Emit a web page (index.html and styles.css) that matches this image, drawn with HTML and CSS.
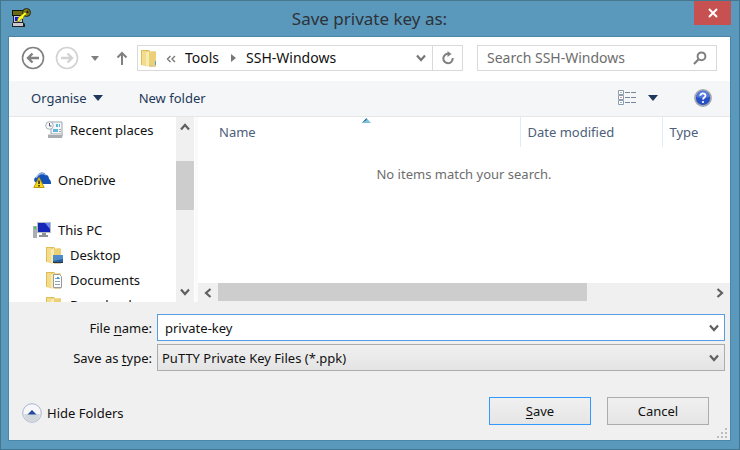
FILE: index.html
```html
<!DOCTYPE html>
<html lang="en">
<head>
  <meta charset="UTF-8" />
  <meta name="viewport" content="width=device-width, initial-scale=1.0" />
  <title>Save private key as:</title>
  <link rel="stylesheet" href="styles.css">
</head>
<body>
  <svg class="defs" aria-hidden="true">
    <symbol id="chevron" viewBox="0 0 10 10"><path d="M1 2.5 5 7 9 2.5" fill="none" stroke="currentColor" stroke-width="2.2"/></symbol>
    <symbol id="folder" viewBox="0 0 18 18">
      <path d="M1 1h8l1 1v14l-2 1-7-1z" fill="#dfbd55"/>
      <path d="M2 2h4v14H2z" fill="#f3dc8c"/>
      <path d="M6 3l9-1 1 1v13l-9 1z" fill="#ecd078"/>
      <path d="M6 3l3-1v15l-3 1z" fill="#f9eab0"/>
      <path d="M9 17h7" stroke="#c9a445"/>
    </symbol>
  </svg>

  <div class="window">
    <header class="titlebar">
      <svg class="app-icon" viewBox="0 0 20 20">
        <path d="M1 2h14v6H1z" fill="#111"/>
        <path d="M2 3h11v4H2z" fill="#6b6a14"/>
        <path d="M2 8h10v6l2 2v3H1v-3l1-2z" fill="#222"/>
        <path d="M3 8h8v6H3zM2 15h10v3H2z" fill="#c9c9d2"/>
        <path d="M4 9h4v4H4z" fill="#1414e0"/>
        <circle cx="15.500" cy="4.500" r="4" fill="#7d7b10" stroke="#222"/>
        <circle cx="16.500" cy="4" r="1.200" fill="#222"/>
        <path d="M14 4 7 10l-1 4 3-1 1-2h2l1-3 3-2z" fill="#ffff1a" stroke="#555510" stroke-width=".5"/>
      </svg>
      <h1>Save private key as:</h1>
      <button class="close" aria-label="Close">
        <svg width="10" height="10" viewBox="0 0 10 10"><path d="M1 1l8 8M9 1 1 9" stroke="#fff" stroke-width="2"/></svg>
      </button>
    </header>

    <main class="dialog">
      <nav class="navbar">
        <button class="icon-btn" aria-label="Back">
          <svg width="24" height="24" viewBox="0 0 24 24" fill="none" stroke="#808080"><circle cx="12" cy="12" r="10.500" stroke-width="1.600"/><path d="M7 12h11M11.500 7.500 7 12l4.500 4.500" stroke-width="2.400"/></svg>
        </button>
        <button class="icon-btn forward" aria-label="Forward">
          <svg width="24" height="24" viewBox="0 0 24 24" fill="none" stroke="#d2d2d2"><circle cx="12" cy="12" r="10.500" stroke-width="1.600"/><path d="M6 12h11M12.500 7.500 17 12l-4.500 4.500" stroke-width="2.400"/></svg>
        </button>
        <button class="icon-btn recent" aria-label="Recent locations">
          <svg width="8" height="5" viewBox="0 0 8 5"><path d="M0 0h8L4 5z" fill="#808080"/></svg>
        </button>
        <button class="icon-btn up" aria-label="Up">
          <svg width="12" height="14" viewBox="0 0 12 14" fill="none" stroke="#808080" stroke-width="2"><path d="M6 14V2M1.500 6.500 6 2l4.500 4.500"/></svg>
        </button>
        <div class="address">
          <svg class="address-folder" viewBox="0 0 18 18"><use href="#folder"/><path d="M15 12h1v4h-1z" fill="#4da3c9"/></svg>
          <svg class="crumb-more" width="10" height="8" viewBox="0 0 10 8" fill="none" stroke="#777" stroke-width="1.400"><path d="M4.500 1 1.500 4l3 3M9 1 6 4l3 3"/></svg>
          <a class="crumb" href="#">Tools</a>
          <svg class="crumb-arrow" width="5" height="8" viewBox="0 0 5 8"><path d="M0 0l5 4-5 4z" fill="#777"/></svg>
          <a class="crumb" href="#">SSH-Windows</a>
          <button class="address-drop" aria-label="Previous locations"><svg class="chevron grey"><use href="#chevron"/></svg></button>
          <button class="refresh" aria-label="Refresh">
            <svg width="14" height="14" viewBox="0 0 14 14"><path d="M7.500 2.800A4.700 4.700 0 1 0 11.700 7" fill="none" stroke="#808080" stroke-width="2"/><path d="M6.500 0v6l4-3z" fill="#808080"/></svg>
          </button>
        </div>
        <div class="search">
          <input type="search" placeholder="Search SSH-Windows" aria-label="Search SSH-Windows">
          <svg width="14" height="14" viewBox="0 0 14 14" fill="none" stroke="#808080"><circle cx="8.500" cy="5.300" r="3.900" stroke-width="2"/><path d="M5.800 8 1 13" stroke-width="2.200"/></svg>
        </div>
      </nav>

      <div class="toolbar">
        <button class="tool">Organise <svg width="10" height="6" viewBox="0 0 10 6"><path d="M0 0h10L5 6z" fill="#1e395b"/></svg></button>
        <button class="tool">New folder</button>
        <button class="tool views" aria-label="Change your view">
          <svg width="19" height="15" viewBox="0 0 19 15">
            <path d="M.5.500h5v4h-5zM.5 5.500h5v4h-5zM.5 10.500h5v4h-5z" fill="#fff" stroke="#8d9cab"/>
            <path d="M2.500 2h1v1h-1z" fill="#3b9a4a"/><path d="M2.500 7h1v1h-1z" fill="#d22"/><path d="M2.500 12h1v1h-1z" fill="#2255dd"/>
            <path d="M7 2.500h5M13 2.500h5M7 7.500h5M13 7.500h5M7 12.500h5M13 12.500h5" stroke="#75869a"/>
          </svg>
          <svg width="10" height="6" viewBox="0 0 10 6"><path d="M0 0h10L5 6z" fill="#1e395b"/></svg>
        </button>
        <button class="tool help" aria-label="Help">
          <svg width="18" height="18" viewBox="0 0 18 18">
            <circle cx="9" cy="9" r="8" fill="#2850c4" stroke="#a3a7af" stroke-width="1.800"/>
            <path d="M2.500 8a6.500 6.500 0 0 1 13 0q-6.500 2-13 0z" fill="#5479dc"/>
            <path d="M6.300 6.800C6.300 3.500 11.700 3.700 11.500 6.800 11.400 8.500 9 8.500 9 10.500" fill="none" stroke="#fff" stroke-width="1.800"/>
            <circle cx="9" cy="13" r="1.100" fill="#fff"/>
          </svg>
        </button>
      </div>

      <div class="browser">
        <ul class="tree">
          <li class="child">
            <svg viewBox="0 0 18 18">
              <path d="M6 1h11v12H6z" fill="#f4f8fb" stroke="#9aa4ad"/><path d="M3 13h15l-1 4H3z" fill="#a9adb0"/><path d="M3 13h14v1H3z" fill="#d8dadb"/>
              <path d="M11 3h2v3h-2zM14 3h1v3h-1zM8 8h5v3H8z" fill="#5fb4dd"/><path d="M14 8h2v1h-2zM14 10h2v1h-2z" fill="#9aa"/>
              <circle cx="4.500" cy="4.500" r="3.800" fill="#f7f9fa" stroke="#a7b0b7"/><path d="M4.500 2v3H6.500" fill="none" stroke="#557"/>
            </svg>
            <a href="#">Recent places</a>
          </li>
          <li class="gap-row"></li>
          <li>
            <svg viewBox="0 0 18 18">
              <path d="M2 11C0 8 2 6 4 6 5 1 11 0 13 4c2 0 3 2 3 4 2 1 2 3 2 5H6z" fill="#1552b8"/>
              <path d="M3 7c2-4 6-6 10-3" fill="none" stroke="#9dbbe8" stroke-width="1.200"/>
              <path d="M6 6.500.800 16.500h10.400z" fill="#f7d917" stroke="#b99a10" stroke-linejoin="round"/>
              <path d="M6 9.500v3.500M6 14v1.500" stroke="#222" stroke-width="1.500"/>
            </svg>
            <a href="#">OneDrive</a>
          </li>
          <li class="gap-row"></li>
          <li>
            <svg viewBox="0 0 18 18">
              <path d="M0 5h4v12H0z" fill="#a9b0b3"/><path d="M1 6h2v2H1z" fill="#48c94e"/>
              <path d="M4 1h14v11H4z" fill="#b9bec2"/><path d="M5 2h12v9H5z" fill="#1628b8"/><path d="M12 2h5v6z" fill="#6c8af0"/>
              <path d="M9 12h4v2h2v2H6v-2h3z" fill="#8d9397"/>
            </svg>
            <a href="#">This PC</a>
          </li>
          <li class="child">
            <svg viewBox="0 0 18 18"><use href="#folder"/><path d="M8 9h10v8H8z" fill="#2b5f9c"/><path d="M8 9h10v4l-10 2z" fill="#4f8ccb"/><path d="M8 16h10v1H8z" fill="#24384e"/></svg>
            <a href="#">Desktop</a>
          </li>
          <li class="child">
            <svg viewBox="0 0 18 18"><use href="#folder"/><path d="M8.500 3.500h6l2 2v11h-8z" fill="#fff" stroke="#9a9a9a"/><path d="M10 7.500h5M10 10.500h5M10 13.500h5" stroke="#8aa4bd"/><path d="M12 6h2v2h-2z" fill="#3fa0e0"/></svg>
            <a href="#">Documents</a>
          </li>
          <li class="child">
            <svg viewBox="0 0 18 18"><use href="#folder"/><circle cx="13" cy="11" r="4.500" fill="#2c78b8"/></svg>
            <a href="#">Downloads</a>
          </li>
        </ul>

        <div class="vscroll">
          <button aria-label="Scroll up"><svg class="chevron flip"><use href="#chevron"/></svg></button>
          <div class="vthumb"></div>
          <button aria-label="Scroll down"><svg class="chevron"><use href="#chevron"/></svg></button>
        </div>

        <section class="files">
          <table>
            <thead>
              <tr>
                <th class="name">Name<svg class="sort" width="9" height="5" viewBox="0 0 9 5"><path d="M0 5 4.500 0 9 5z" fill="#7fc0dd"/><path d="M0 5 4.500 0v2z" fill="#2b5f80"/></svg></th>
                <th class="date">Date modified</th>
                <th class="type">Type</th>
              </tr>
            </thead>
            <tbody>
              <tr><td colspan="3">No items match your search.</td></tr>
            </tbody>
          </table>
          <div class="hscroll">
            <button aria-label="Scroll left"><svg class="chevron left"><use href="#chevron"/></svg></button>
            <div class="htrack"><div class="hthumb"></div></div>
            <button aria-label="Scroll right"><svg class="chevron right"><use href="#chevron"/></svg></button>
          </div>
        </section>
      </div>

      <form class="save-form">
        <div class="fields">
          <label for="fileName">File <u>n</u>ame:</label>
          <div class="combo active">
            <input id="fileName" type="text" value="private-key">
            <svg class="chevron"><use href="#chevron"/></svg>
          </div>
          <label for="fileType">Save as <u>t</u>ype:</label>
          <div class="combo">
            <select id="fileType"><option>PuTTY Private Key Files (*.ppk)</option></select>
            <svg class="chevron"><use href="#chevron"/></svg>
          </div>
        </div>
        <div class="actions">
          <button type="button" class="hide-folders">
            <svg width="20" height="20" viewBox="0 0 20 20">
              <circle cx="10" cy="10" r="9.300" fill="#f6f7fa" stroke="#a9b2cf"/>
              <path d="M2 11h16a8 8 0 0 1-16 0z" fill="#d3d8dc"/>
              <path d="M5.500 11.500 10 7l4.500 4.500z" fill="#24489c"/>
            </svg>
            Hide Folders
          </button>
          <button type="button" class="btn default"><span><u>S</u>ave</span></button>
          <button type="button" class="btn">Cancel</button>
        </div>
        <svg class="grip" width="10" height="10" viewBox="0 0 10 10"><path d="M8 0h2v2H8zM4 4h2v2H4zM8 4h2v2H8zM0 8h2v2H0zM4 8h2v2H4zM8 8h2v2H8z" fill="#bdbdbd"/></svg>
      </form>
    </main>
  </div>
</body>
</html>
```
FILE: styles.css
```css
* {
  box-sizing: border-box;
  margin: 0;
  padding: 0;
}
body {
  font-family: 'Noto Sans', 'Open Sans', sans-serif;
  font-size: 13px;
  line-height: 18px;
  color: #111;
}
button,
input,
select {
  font: inherit;
  color: inherit;
  background: none;
  border: none;
  outline: none;
}
button {
  display: flex;
  align-items: center;
  justify-content: center;
}
a {
  color: inherit;
  text-decoration: none;
}
u {
  text-underline-offset: 2px;
}
svg {
  flex: none;
}
.defs {
  position: absolute;
  width: 0;
  height: 0;
}
.window {
  display: flex;
  flex-direction: column;
  height: 100vh;
  padding: 0 8px 8px 7px;
  background: #5a98bc;
  border: 1px solid #44768f;
}

/* title bar */
.titlebar {
  display: flex;
  align-items: flex-start;
  height: 35px;
  padding-left: 3px;
}
.app-icon {
  width: 20px;
  height: 20px;
  margin-top: 7px;
}
.titlebar h1 {
  flex: 1;
  padding: 6px 0 0 14px;
  font-size: 17px;
  font-weight: normal;
  line-height: 24px;
  text-align: center;
  color: #2d3237;
}
.close {
  width: 37px;
  height: 24px;
  background: #c75050;
}
.dialog {
  flex: 1;
  min-height: 0;
  display: flex;
  flex-direction: column;
  background: #f0f0f0;
  border: 1px solid #4c86a7;
}

/* navigation */
.navbar {
  display: flex;
  align-items: center;
  height: 44px;
  padding: 0 13px 2px 12px;
  font-size: 14px;
  background: #fff;
}
.forward {
  margin-left: 10px;
}
.recent {
  margin-left: 12px;
}
.up {
  margin: 0 9px 0 17px;
}
.address {
  flex: 1;
  display: flex;
  align-items: center;
  height: 26px;
  padding-left: 2px;
  border: 1px solid #d9d9d9;
}
.address-folder {
  width: 18px;
  height: 20px;
}
.crumb-more {
  margin: 1px 9px 0 8px;
}
.crumb-arrow {
  margin: 0 10px 0 12px;
}
.address-drop {
  width: 22px;
  margin-left: auto;
}
.refresh {
  width: 30px;
  height: 24px;
  border-left: 1px solid #d9d9d9;
}
.search {
  display: flex;
  align-items: center;
  width: 240px;
  height: 26px;
  margin-left: 14px;
  padding: 0 9px;
  border: 1px solid #d9d9d9;
}
.search input {
  flex: 1;
  min-width: 0;
}
.search input::placeholder {
  color: #6d6d6d;
}

/* toolbar */
.toolbar {
  display: flex;
  align-items: center;
  height: 36px;
  padding: 0 18px 2px 22px;
  background: #f5f6f7;
  border-bottom: 1px solid #e6e7e8;
}
.tool {
  gap: 6px;
  margin-right: 36px;
  color: #1e395b;
}
.views {
  gap: 11px;
  margin-left: auto;
}
.help {
  margin-right: 0;
}

/* folder tree and file list */
.browser {
  flex: 1;
  min-height: 0;
  display: flex;
  background: #fff;
}
.tree {
  width: 167px;
  overflow: hidden;
  list-style: none;
}
.tree li {
  display: flex;
  align-items: center;
  gap: 7px;
  height: 25px;
  padding-left: 24px;
  white-space: nowrap;
}
.tree li.child {
  padding-left: 36px;
}
.tree svg {
  width: 18px;
  height: 18px;
}
.chevron {
  width: 10px;
  height: 10px;
  color: #606060;
}
.chevron.grey {
  color: #777;
}
.chevron.flip {
  transform: rotate(180deg);
}
.chevron.left {
  transform: rotate(90deg);
}
.chevron.right {
  transform: rotate(-90deg);
}
.vscroll {
  display: flex;
  flex-direction: column;
  justify-content: space-between;
  width: 18px;
  background: #f0f0f0;
}
.vscroll button {
  width: 18px;
  height: 20px;
}
.vthumb {
  height: 26%;
  margin-bottom: 48px;
  background: #cdcdcd;
}
.files {
  flex: 1;
  display: flex;
  flex-direction: column;
  justify-content: space-between;
  margin-left: 1px;
  border-left: 3px solid #fafafa;
}
.files table {
  width: 100%;
  table-layout: fixed;
  border-collapse: collapse;
}
.files th {
  height: 30px;
  padding-left: 7px;
  font-weight: normal;
  text-align: left;
  color: #4c607a;
  border-left: 1px solid #e1ebf5;
}
.files .name {
  position: relative;
  padding-left: 21px;
  border-left: none;
}
.sort {
  position: absolute;
  top: 1px;
  left: 51%;
}
.files .date {
  width: 142px;
}
.files .type {
  width: 68px;
}
.files td {
  padding-top: 18px;
  text-align: center;
  color: #6d6d6d;
}
.hscroll {
  display: flex;
  height: 19px;
  background: #f0f0f0;
}
.hscroll button {
  width: 20px;
}
.htrack {
  flex: 1;
}
.hthumb {
  width: 75%;
  height: 18px;
  background: #cdcdcd;
}

/* file name, type and buttons */
.save-form {
  position: relative;
  padding: 12px 5px 15px 13px;
}
.fields {
  display: grid;
  grid-template-columns: 130px 1fr;
  gap: 3px 5px;
  align-items: center;
}
.fields label {
  text-align: right;
}
.combo {
  display: flex;
  align-items: center;
  height: 27px;
  padding-right: 5px;
  background: linear-gradient(#f0f0f0, #e4e4e4);
  border: 1px solid #acacac;
}
.combo.active {
  background: #fff;
  border-color: #569de5;
}
.combo input {
  flex: 1;
  min-width: 0;
  padding-left: 7px;
}
.combo select {
  flex: 1;
  min-width: 0;
  height: 25px;
  margin-right: -10px;
  padding-left: 4px;
  appearance: none;
}
.combo .chevron {
  pointer-events: none;
}
.actions {
  display: flex;
  align-items: center;
  gap: 16px;
  margin-top: 26px;
  padding-right: 16px;
}
.hide-folders {
  gap: 5px;
  margin-right: auto;
  padding-top: 4px;
}
.btn {
  width: 102px;
  height: 28px;
  background: linear-gradient(#f0f0f0, #e5e5e5);
  border: 1px solid #acacac;
}
.btn.default {
  border-color: #3399ff;
}
.grip {
  position: absolute;
  right: 3px;
  bottom: 2px;
}
```
